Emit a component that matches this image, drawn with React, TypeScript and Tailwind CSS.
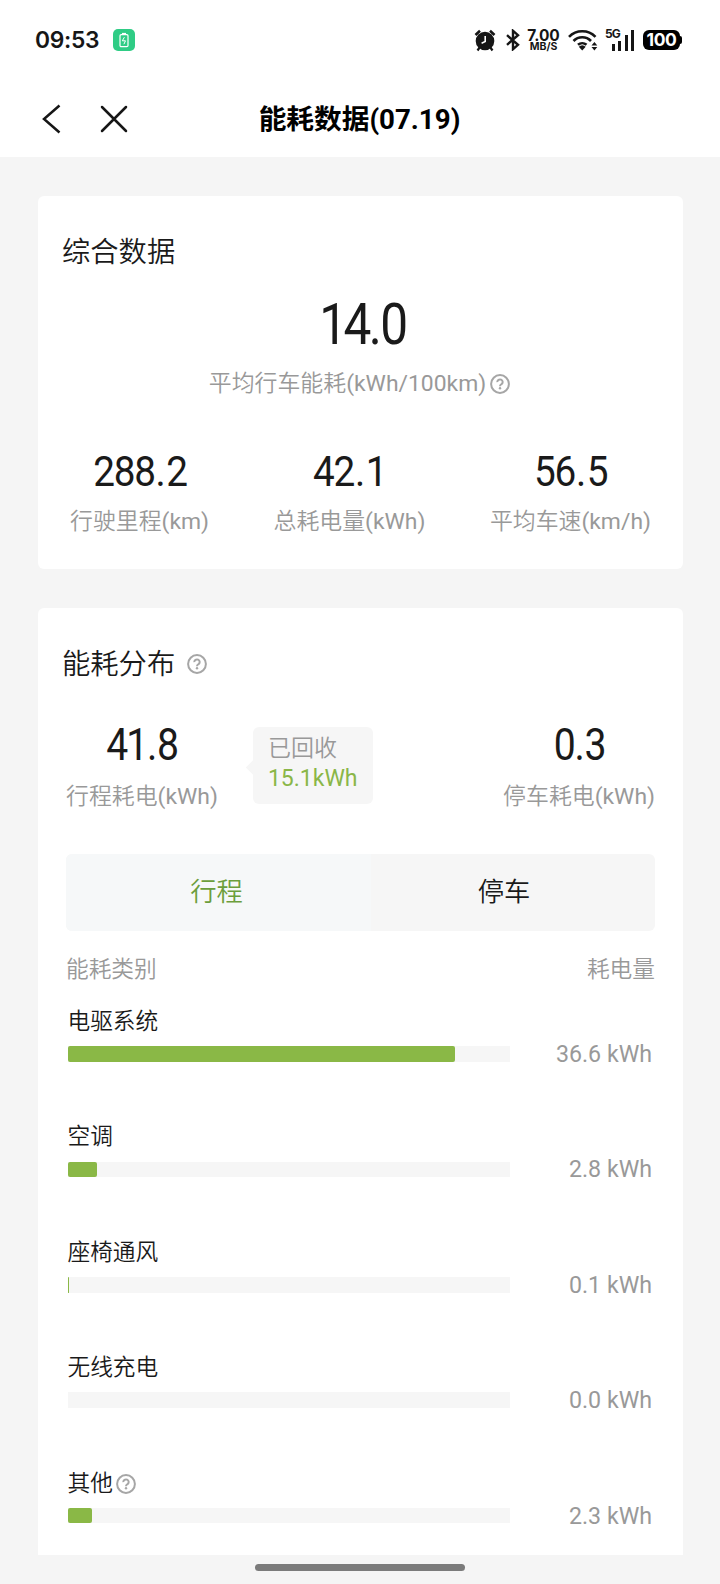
import type { ReactNode } from 'react';

const CATEGORIES = [
  { name: '电驱系统', value: '36.6 kWh', percent: 87.6 },
  { name: '空调', value: '2.8 kWh', percent: 6.7 },
  { name: '座椅通风', value: '0.1 kWh', percent: 0.25 },
  { name: '无线充电', value: '0.0 kWh', percent: 0 },
  { name: '其他', value: '2.3 kWh', percent: 5.5, help: true },
];

function HelpIcon({ className = '' }: { className?: string }) {
  return (
    <svg viewBox="0 0 20 20" fill="none" className={`h-5 w-5 shrink-0 text-[#a6a6a6] ${className}`}>
      <circle cx="10" cy="10" r="8.9" stroke="currentColor" strokeWidth="2" />
      <path d="M7.3 8.2a2.7 2.6 0 1 1 4.300 1.900c-1 .7-1.600 1-1.600 2.100" stroke="currentColor" strokeWidth="2" />
      <circle cx="10" cy="14.300" r="1.200" fill="currentColor" />
    </svg>
  );
}

function StatusBar() {
  return (
    <div className="flex h-20 items-center pl-[35px] pr-[38px] text-[#161616]">
      <span className="w-[64px] whitespace-nowrap pt-px font-[Inter,sans-serif] text-[22.800px] font-semibold leading-none tracking-[-0.300px]">09:53</span>
      <svg viewBox="0 0 22 22" fill="none" className="ml-[14px] h-[22px] w-[22px]">
        <rect width="22" height="22" rx="5" fill="#2fcc85" />
        <rect x="7" y="5.600" width="8" height="12" rx="1.200" stroke="#fff" strokeWidth="1.200" />
        <path d="M9 4.600h4" stroke="#fff" strokeWidth="1.400" />
        <path d="M11.400 8.200 9.300 11.800h3.200l-1.600 3.400" stroke="#fff" strokeWidth="1" />
      </svg>

      <svg viewBox="0 0 22 23" className="ml-auto h-[23px] w-[22px]">
        <path d="M1.500 6 6 1.800M16 1.800 20.500 6" stroke="currentColor" strokeWidth="2.600" />
        <path d="m5.600 18.500-2.100 3M16.400 18.500l2.100 3" stroke="currentColor" strokeWidth="2.200" />
        <circle cx="11" cy="12" r="9.300" fill="currentColor" />
        <path d="M11.200 7v5.600l-3.600 1.600" fill="none" stroke="#fff" strokeWidth="1.600" />
      </svg>
      <svg viewBox="0 0 14 22" fill="none" className="ml-[10px] h-[22px] w-[14px]">
        <path d="m1 6.200 11 9.600-5 4.400V1.800l5 4.400L1 15.800" stroke="currentColor" strokeWidth="2.400" />
      </svg>
      <div className="ml-[7px] flex w-[33px] flex-col items-center font-[Inter,sans-serif] font-bold">
        <span className="text-[15.500px] leading-[13px] tracking-[-0.100px]">7.00</span>
        <span className="text-[10.500px] leading-[10px]">MB/S</span>
      </div>
      <svg viewBox="0 0 30 22" fill="none" className="ml-[8px] h-[22px] w-[30px]">
        <path d="M1 7.800a18.500 18.500 0 0 1 26.500 0M5.500 12a12 12 0 0 1 17.500 0M10 15.800a6.400 6.400 0 0 1 8.500 0" stroke="currentColor" strokeWidth="2.600" />
        <path d="M10.800 17.800a5.200 5.200 0 0 1 6.900 0L14.200 21.500z" fill="currentColor" />
        <path d="m23.500 16.500 2.900-3.500 2.900 3.500zM23.500 18l2.900 3.500 2.900-3.500z" fill="currentColor" />
      </svg>
      <div className="relative ml-[7px] flex h-[22px] w-[29px] items-end justify-end gap-[3.400px]">
        <span className="absolute left-0 top-0 font-[Inter,sans-serif] text-[12px] font-bold leading-[10px] tracking-[-1px]">5G</span>
        <i className="h-[7.500px] w-[3px] bg-[#161616]" />
        <i className="h-[10px] w-[3px] bg-[#161616]" />
        <i className="h-[16px] w-[3px] bg-[#161616]" />
        <i className="h-[21.500px] w-[3px] bg-[#161616]" />
      </div>
      <div className="ml-[9px] flex items-center">
        <span className="flex h-[20px] w-[37px] items-center justify-center rounded-[6px] bg-black font-[Inter,sans-serif] text-[17.500px] font-bold leading-none tracking-[-0.400px] text-white">
          100
        </span>
        <i className="h-[8px] w-[2px] rounded-r-[2px] bg-black" />
      </div>
    </div>
  );
}

function NavBar() {
  return (
    <header className="relative flex h-[77px] items-center justify-center">
      <div className="absolute left-[42px] top-[24px] flex items-center text-[#161616]">
        <svg viewBox="0 0 19 30" fill="none" className="h-[30px] w-[19px]">
          <path d="M17.500 1.500 2 15l15.500 13.500" stroke="currentColor" strokeWidth="2.500" />
        </svg>
        <svg viewBox="0 0 28 28" fill="none" className="ml-[39px] h-[28px] w-[28px]">
          <path d="m2 2 24 24M26 2 2 26" stroke="currentColor" strokeWidth="2.500" strokeLinecap="round" />
        </svg>
      </div>
      <h1 className="pt-[3px] pr-[1px] font-[Roboto,'Noto_Sans_CJK_SC',sans-serif] text-[27.700px] font-bold leading-none text-black">
        能耗数据(07.19)
      </h1>
    </header>
  );
}

// Condensed digits with a little air around the decimal point
function Figure({ value, className }: { value: string; className: string }) {
  const [whole, decimal] = value.split('.');
  return (
    <span className={`inline-block text-[#1a1a1a] ${className}`}>
      {whole}
      <span className="ml-[1px] mr-[2px]">.</span>
      {decimal}
    </span>
  );
}

function Stat({ value, large, children }: { value: string; large?: boolean; children: ReactNode }) {
  return (
    <div className="flex flex-col items-center">
      <Figure
        value={value}
        className={`h-[46px] leading-[46px] ${large ? 'scale-x-[0.87] pt-px text-[45px] tracking-[-2.400px]' : 'scale-x-[0.9] text-[43px] tracking-[-1.400px]'}`}
      />
      <span className={`text-[22.900px] leading-[36px] ${large ? 'mt-[12px]' : 'mt-[10px]'}`}>{children}</span>
    </div>
  );
}

function Summary() {
  return (
    <section className="h-[373px] rounded-[6px] bg-white pt-[38px]">
      <h2 className="pl-[24px] text-[28.300px] leading-[38px] text-[#1a1a1a]">综合数据</h2>
      <div className="mt-[20px] flex justify-center">
        <Figure value="14.0" className="scale-x-[0.87] pl-[3px] text-[57px] leading-[66px] tracking-[-4px]" />
      </div>
      <div className="mt-[8px] flex items-center justify-center pr-[2px] text-[22.900px] leading-[36px]">
        平均行车能耗(kWh/100km)
        <HelpIcon className="ml-[4px]" />
      </div>
      <div className="mt-[46px] flex justify-between pl-[32px] pr-[32px]">
        <Stat value="288.2">行驶里程(km)</Stat>
        <Stat value="42.1">总耗电量(kWh)</Stat>
        <Stat value="56.5">平均车速(km/h)</Stat>
      </div>
    </section>
  );
}

function Distribution() {
  return (
    <section className="h-[947px] rounded-t-[6px] bg-white px-[28px] pt-[38px]">
      <h2 className="-ml-[4px] flex items-center text-[28.300px] leading-[38px] text-[#1a1a1a]">
        能耗分布
        <HelpIcon className="-mt-[2px] ml-[12px]" />
      </h2>

      <div className="mt-[37px] flex">
        <Stat value="41.8" large>行程耗电(kWh)</Stat>
        <div className="relative ml-[35px] mt-[6px] h-[77px] w-[120px] rounded-[6px] bg-[#f6f6f6] pl-[15px] pt-[7px] text-[23px] leading-[30px]">
          <i className="absolute -left-[5px] top-[35px] h-[11px] w-[11px] rotate-45 bg-[#f6f6f6]" />
          <div>已回收</div>
          <div className="text-[#8ab648]">15.1kWh</div>
        </div>
        <div className="ml-auto">
          <Stat value="0.3" large>停车耗电(kWh)</Stat>
        </div>
      </div>

      <div className="mt-[39px] grid h-[77px] grid-cols-[305px_auto] overflow-hidden rounded-[6px] bg-[#f6f6f6] text-[26.300px]">
        <button className="bg-[#f6f8f9] pr-[4px] text-[#6c9e3c]">行程</button>
        <button className="pr-[18px] text-[#1a1a1a]">停车</button>
      </div>

      <div className="mt-[21px] flex justify-between text-[22.700px] leading-[36px]">
        <span>能耗类别</span>
        <span>耗电量</span>
      </div>

      <ul className="mt-[16px]">
        {CATEGORIES.map((item) => (
          <li key={item.name} className="h-[115.400px] pl-[1.500px] pr-[3px]">
            <div className="flex items-center text-[22.700px] leading-[36px] text-[#1a1a1a]">
              {item.name}
              {item.help && <HelpIcon className="ml-[3px]" />}
            </div>
            <div className="-mt-[4px] flex items-center justify-between">
              <div className="h-[15.500px] w-[442px] bg-[#f6f6f6]">
                <div className="h-full rounded-[2px] bg-[#8ab846]" style={{ width: `${item.percent}%` }} />
              </div>
              <span className="text-[23.200px] leading-[36px]">{item.value}</span>
            </div>
          </li>
        ))}
      </ul>
    </section>
  );
}

export default function App() {
  return (
    <div className="h-[1584px] w-[720px] overflow-hidden bg-[#f5f5f5] font-[Roboto,'Noto_Sans_CJK_SC_DemiLight','Noto_Sans_CJK_SC',sans-serif] text-[#999999]">
      <div className="h-[157px] bg-white">
        <StatusBar />
        <NavBar />
      </div>
      <main className="flex flex-col gap-[39px] pl-[38px] pr-[37px] pt-[39px]">
        <Summary />
        <Distribution />
      </main>
      <div className="mx-auto mt-[9px] h-[7px] w-[210px] rounded-full bg-[#7b7b7b]" />
    </div>
  );
}
